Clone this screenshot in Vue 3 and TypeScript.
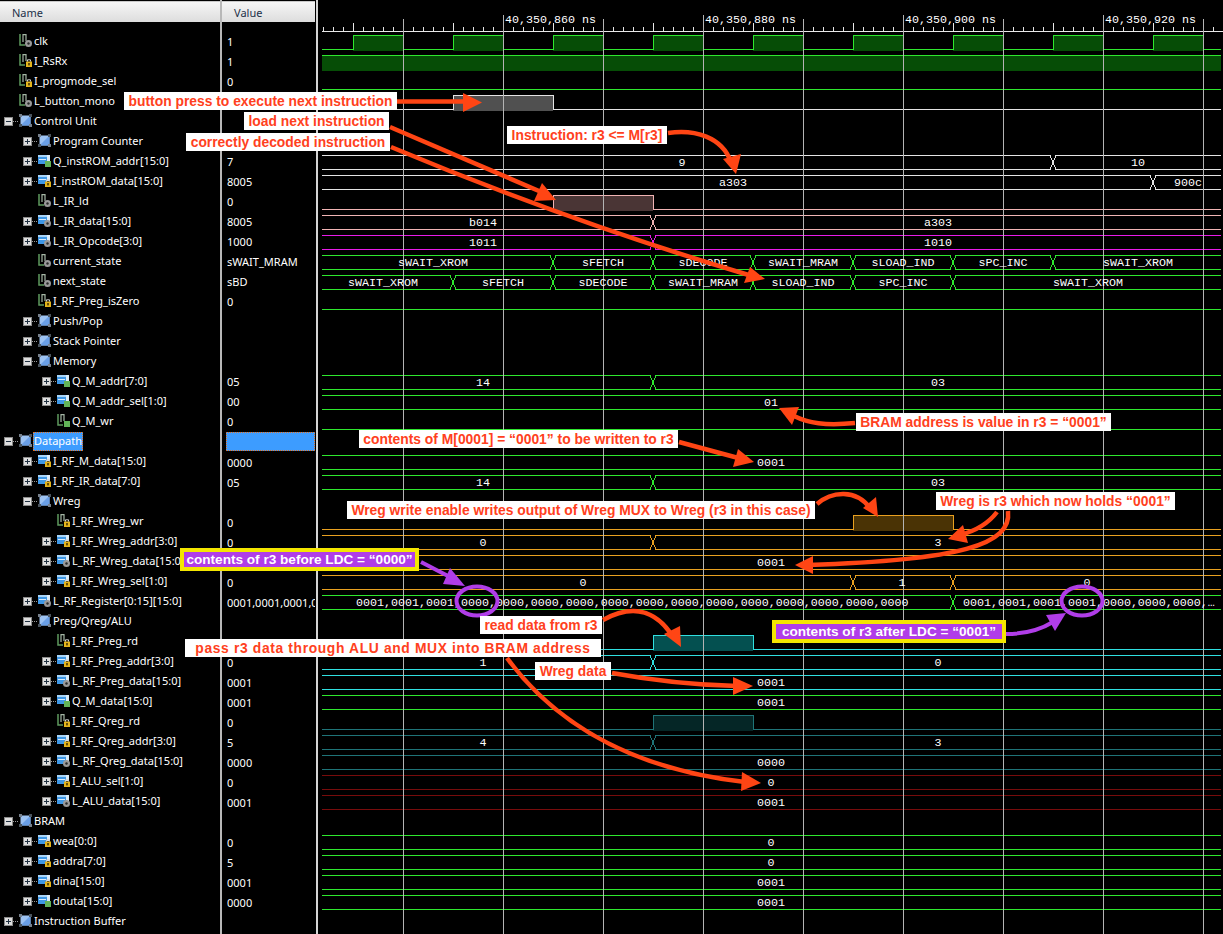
<template>
  <div class="sim">
    <div class="signals">
      <div class="col names">
        <div class="col-head">Name</div>
        <div class="col-body">
          <div v-for="row in rows" :key="row.name" class="name-row" :class="'depth' + row.depth">
            <span v-if="row.toggle" class="toggle" :class="row.toggle">
              <i class="dots"></i>
            </span>
            <svg class="icon" viewBox="0 0 13 13">
              <template v-if="row.icon === 'group'">
                <rect x="1.5" y="1.5" width="10" height="10" fill="#9cc2f2" />
                <path d="M1.5 11.5 L11.5 1.5 V11.5 Z" fill="#6a9fe6" />
                <rect x="0" y="0" width="3" height="3" fill="#76808c" />
                <rect x="10" y="0" width="3" height="3" fill="#4a545e" />
                <rect x="0" y="10" width="3" height="3" fill="#4a545e" />
                <rect x="10" y="10" width="3" height="3" fill="#76808c" />
              </template>
              <template v-else-if="row.kind === 'bus'">
                <rect x="0" y="1" width="9" height="9" fill="#3f98e6" />
                <rect x="0" y="1" width="9" height="2" fill="#a8d4f8" />
                <rect x="1" y="5" width="7" height="1" fill="#d8ecff" />
                <rect x="9" y="1" width="3" height="6" fill="#dcecfa" />
              </template>
              <template v-else>
                <path d="M1 0 V11 H6" fill="none" stroke="#5f9a5f" stroke-width="1.5" />
                <path d="M4 0 V8 M4 .7 H7 V7" fill="none" stroke="#a4b6a4" stroke-width="1.2" />
              </template>
              <template v-if="row.badge === 'lock'">
                <rect x="7" y="7.5" width="6" height="5.5" fill="#e4b41c" />
                <path d="M8.5 7.5 V5.8 H11.5 V7.5" fill="none" stroke="#d0d0d0" stroke-width="1" />
                <rect x="9.2" y="9" width="1.6" height="2.4" fill="#4a3600" />
              </template>
              <template v-else-if="row.badge === 'gear'">
                <circle cx="9.5" cy="9.5" r="3.5" fill="#9a9a9a" />
                <circle cx="9.5" cy="9.5" r="1.2" fill="#2a2a2a" />
              </template>
              <rect v-else-if="row.badge === 'out'" x="7" y="7" width="6" height="6" fill="#62b458" />
            </svg>
            <span class="label" :class="{ selected: row.selected }">{{ row.name }}</span>
          </div>
        </div>
      </div>
      <div class="col values">
        <div class="col-head">Value</div>
        <div class="col-body">
          <div v-for="row in rows" :key="row.name" class="value-row">
            <span v-if="row.selected" class="value-selected"></span>
            <template v-else>{{ row.value }}</template>
          </div>
        </div>
      </div>
    </div>

    <svg class="wave" width="905" height="934" viewBox="318 0 905 934">
      <path :d="rulerPath" class="ruler" />
      <text v-for="t in rulerLabels" :key="t" class="mono" :x="t" y="23">40,350,{{ 860 + (t - 505) / 10 }} ns</text>

      <g v-for="w in waves" :key="w.row">
        <rect v-for="p in w.pulses || []" :key="p[0]" :x="p[0]" :y="top(w.row)" :width="p[1] - p[0]" height="16" :fill="w.fill" />
        <path :d="wavePath(w)" fill="none" :stroke="w.color" shape-rendering="crispEdges" />
      </g>

      <path :d="gridPath" class="grid" />

      <template v-for="w in waves" :key="w.row">
        <text v-for="l in w.labels || []" :key="l[0]" class="mono" :x="l[0]" :y="41 + 20 * w.row + 5" text-anchor="middle">{{ l[1] }}</text>
      </template>
      <text class="mono" x="356" y="606">{{ regBefore }}</text>
      <text class="mono" x="963" y="606">{{ regAfter }}</text>
    </svg>

    <svg class="notes-layer" width="1223" height="934" viewBox="0 0 1223 934">
      <path v-for="d in redLines" :key="d" :d="d" class="red-line" />
      <polygon v-for="p in redHeads" :key="p" :points="p" fill="#ff4514" />
      <path v-for="d in purpleLines" :key="d" :d="d" class="purple-line" />
      <polygon v-for="p in purpleHeads" :key="p" :points="p" fill="#b03de8" />
      <ellipse cx="477" cy="601" rx="20.5" ry="14.5" class="purple-line" />
      <ellipse cx="1082" cy="601" rx="20.5" ry="14.5" class="purple-line" />
    </svg>

    <div
      v-for="n in notes"
      :key="n.text"
      class="note"
      :class="{ purple: n.purple, spaced: n.spaced }"
      :style="{ left: n.x + 'px', top: n.y + 'px', width: n.w + 'px', height: n.h + 'px' }"
    >
      {{ n.text }}
    </div>
  </div>
</template>

<script setup lang="ts">
interface Row {
  name: string
  value?: string
  depth: number
  toggle?: 'plus' | 'minus'
  icon?: 'group'
  kind?: 'bus' | 'bit'
  badge?: 'lock' | 'gear' | 'out'
  selected?: boolean
}

interface Wave {
  row: number
  color: string
  fill?: string
  pulses?: number[][]
  crosses?: number[]
  bus?: boolean
  labels?: [number, string][]
}

interface Note {
  x: number
  y: number
  w: number
  h: number
  text: string
  purple?: boolean
  spaced?: boolean
}

const group = (name: string, depth: number, toggle: 'plus' | 'minus', selected = false): Row => ({
  name, depth, toggle, icon: 'group', selected
})
const bus = (name: string, value: string, depth: number, badge: 'lock' | 'gear' | 'out'): Row => ({
  name, value, depth, toggle: 'plus', kind: 'bus', badge
})
const bit = (name: string, value: string, depth: number, badge: 'lock' | 'gear' | 'out'): Row => ({
  name, value, depth, kind: 'bit', badge
})

const rows: Row[] = [
  bit('clk', '1', 0, 'gear'),
  bit('I_RsRx', '1', 0, 'lock'),
  bit('I_progmode_sel', '0', 0, 'lock'),
  bit('L_button_mono', '', 0, 'gear'),
  group('Control Unit', 0, 'minus'),
  group('Program Counter', 1, 'plus'),
  bus('Q_instROM_addr[15:0]', '7', 1, 'out'),
  bus('I_instROM_data[15:0]', '8005', 1, 'lock'),
  bit('L_IR_ld', '0', 1, 'gear'),
  bus('L_IR_data[15:0]', '8005', 1, 'gear'),
  bus('L_IR_Opcode[3:0]', '1000', 1, 'gear'),
  bit('current_state', 'sWAIT_MRAM', 1, 'gear'),
  bit('next_state', 'sBD', 1, 'gear'),
  bit('I_RF_Preg_isZero', '0', 1, 'lock'),
  group('Push/Pop', 1, 'plus'),
  group('Stack Pointer', 1, 'plus'),
  group('Memory', 1, 'minus'),
  bus('Q_M_addr[7:0]', '05', 2, 'out'),
  bus('Q_M_addr_sel[1:0]', '00', 2, 'out'),
  bit('Q_M_wr', '0', 2, 'out'),
  group('Datapath', 0, 'minus', true),
  bus('I_RF_M_data[15:0]', '0000', 1, 'lock'),
  bus('I_RF_IR_data[7:0]', '05', 1, 'lock'),
  group('Wreg', 1, 'minus'),
  bit('I_RF_Wreg_wr', '0', 2, 'lock'),
  bus('I_RF_Wreg_addr[3:0]', '0', 2, 'lock'),
  bus('L_RF_Wreg_data[15:0]', '0001', 2, 'gear'),
  bus('I_RF_Wreg_sel[1:0]', '0', 2, 'lock'),
  bus('L_RF_Register[0:15][15:0]', '0001,0001,0001,0000', 1, 'gear'),
  group('Preg/Qreg/ALU', 1, 'minus'),
  bit('I_RF_Preg_rd', '0', 2, 'lock'),
  bus('I_RF_Preg_addr[3:0]', '0', 2, 'lock'),
  bus('L_RF_Preg_data[15:0]', '0001', 2, 'gear'),
  bus('Q_M_data[15:0]', '0001', 2, 'out'),
  bit('I_RF_Qreg_rd', '0', 2, 'lock'),
  bus('I_RF_Qreg_addr[3:0]', '5', 2, 'lock'),
  bus('L_RF_Qreg_data[15:0]', '0000', 2, 'gear'),
  bus('I_ALU_sel[1:0]', '0', 2, 'lock'),
  bus('L_ALU_data[15:0]', '0001', 2, 'gear'),
  group('BRAM', 0, 'minus'),
  bus('wea[0:0]', '0', 1, 'lock'),
  bus('addra[7:0]', '5', 1, 'lock'),
  bus('dina[15:0]', '0001', 1, 'lock'),
  bus('douta[15:0]', '0000', 1, 'out'),
  group('Instruction Buffer', 0, 'plus')
]

const GREEN = '#2ee82e'
const WHITE = '#e4e4e4'
const PINK = '#f0b4b4'
const MAGENTA = '#e81ce8'
const ORANGE = '#e8a020'
const CYAN = '#30e0e0'
const TEAL = '#1f7478'
const DARKRED = '#780c0c'

const waves: Wave[] = [
  {
    row: 0, color: GREEN, fill: '#064d06',
    pulses: [[353, 403], [453, 503], [553, 603], [653, 703], [753, 803], [853, 903], [953, 1003], [1053, 1103], [1153, 1203]]
  },
  { row: 1, color: GREEN, fill: '#064d06', pulses: [[322, 1221]] },
  { row: 2, color: GREEN },
  { row: 3, color: WHITE, fill: '#505050', pulses: [[453, 553]] },
  { row: 6, bus: true, color: WHITE, crosses: [1053], labels: [[682, '9'], [1138, '10']] },
  { row: 7, bus: true, color: WHITE, crosses: [1153], labels: [[733, 'a303'], [1188, '900c']] },
  { row: 8, color: PINK, fill: '#4a3535', pulses: [[553, 653]] },
  { row: 9, bus: true, color: PINK, crosses: [653], labels: [[483, 'b014'], [938, 'a303']] },
  { row: 10, bus: true, color: MAGENTA, crosses: [653], labels: [[483, '1011'], [938, '1010']] },
  {
    row: 11, bus: true, color: GREEN, crosses: [553, 653, 753, 853, 953, 1053],
    labels: [[433, 'sWAIT_XROM'], [603, 'sFETCH'], [703, 'sDECODE'], [803, 'sWAIT_MRAM'], [903, 'sLOAD_IND'], [1003, 'sPC_INC'], [1138, 'sWAIT_XROM']]
  },
  {
    row: 12, bus: true, color: GREEN, crosses: [453, 553, 653, 753, 853, 953],
    labels: [[383, 'sWAIT_XROM'], [503, 'sFETCH'], [603, 'sDECODE'], [703, 'sWAIT_MRAM'], [803, 'sLOAD_IND'], [903, 'sPC_INC'], [1088, 'sWAIT_XROM']]
  },
  { row: 13, color: GREEN },
  { row: 17, bus: true, color: GREEN, crosses: [653], labels: [[483, '14'], [938, '03']] },
  { row: 18, bus: true, color: GREEN, labels: [[771, '01']] },
  { row: 19, color: GREEN },
  { row: 21, bus: true, color: GREEN, labels: [[771, '0001']] },
  { row: 22, bus: true, color: GREEN, crosses: [653], labels: [[483, '14'], [938, '03']] },
  { row: 24, color: ORANGE, fill: '#4a3305', pulses: [[853, 953]] },
  { row: 25, bus: true, color: ORANGE, crosses: [653], labels: [[483, '0'], [938, '3']] },
  { row: 26, bus: true, color: ORANGE, labels: [[771, '0001']] },
  { row: 27, bus: true, color: ORANGE, crosses: [853, 953], labels: [[583, '0'], [902, '1'], [1087, '0']] },
  { row: 28, bus: true, color: GREEN, crosses: [953] },
  { row: 30, color: CYAN, fill: '#045050', pulses: [[653, 753]] },
  { row: 31, bus: true, color: CYAN, crosses: [653], labels: [[483, '1'], [938, '0']] },
  { row: 32, bus: true, color: CYAN, labels: [[771, '0001']] },
  { row: 33, bus: true, color: GREEN, labels: [[771, '0001']] },
  { row: 34, color: TEAL, fill: '#052626', pulses: [[653, 753]] },
  { row: 35, bus: true, color: TEAL, crosses: [653], labels: [[483, '4'], [938, '3']] },
  { row: 36, bus: true, color: TEAL, labels: [[771, '0000']] },
  { row: 37, bus: true, color: DARKRED, labels: [[771, '0']] },
  { row: 38, bus: true, color: DARKRED, labels: [[771, '0001']] },
  { row: 40, bus: true, color: GREEN, labels: [[771, '0']] },
  { row: 41, bus: true, color: GREEN, labels: [[771, '0']] },
  { row: 42, bus: true, color: GREEN, labels: [[771, '0001']] },
  { row: 43, bus: true, color: GREEN, labels: [[771, '0001']] }
]

const START = 322
const END = 1221

const top = (row: number) => 41 + 20 * row - 6

// line paths sit on half pixels so they stay one pixel wide
const wavePath = (w: Wave): string => {
  const hi = top(w.row) + 0.5
  const lo = hi + 14
  if (w.bus) {
    let d = ''
    let from = START
    for (const x of w.crosses || []) {
      d += `M${from} ${hi}H${x - 3}M${from} ${lo}H${x - 3}`
      d += `M${x - 3} ${hi}L${x + 3} ${lo}M${x - 3} ${lo}L${x + 3} ${hi}`
      from = x + 3
    }
    return d + `M${from} ${hi}H${END}M${from} ${lo}H${END}`
  }
  const pulses = w.pulses || []
  let d = ''
  let from = START
  for (const p of pulses) {
    if (p[0] > from) d += `M${from} ${lo}H${p[0]}V${hi}`
    else d += `M${p[0]} ${hi}`
    d += `H${p[1]}`
    if (p[1] < END) d += `V${lo}`
    from = p[1]
  }
  if (from < END) d += `${pulses.length ? '' : `M${from} ${lo}`}H${END}`
  return d
}

const rulerLabels = [505, 705, 905, 1105]

const rulerPath = (() => {
  let d = 'M322 31.5H1223'
  for (let x = 323; x < 1223; x += 10) {
    const h = (x - 353) % 50 === 0 ? 8 : 4
    d += `M${x + 0.5} 31V${31 - h}`
  }
  return d
})()

const gridPath = (() => {
  let d = ''
  for (let x = 403; x < 1223; x += 100) {
    d += `M${x + 0.5} ${(x - 503) % 200 === 0 ? 15 : 19}V934`
  }
  return d
})()

const regBefore = ['0001', '0001', '0001', ...Array(13).fill('0000')].join(',')
const regAfter = '0001,0001,0001,0001,0000,0000,0000,…'

const notes: Note[] = [
  { x: 124, y: 92, w: 273, h: 18, text: 'button press to execute next instruction' },
  { x: 244, y: 112, w: 145, h: 18, text: 'load next instruction' },
  { x: 186, y: 133, w: 204, h: 18, text: 'correctly decoded instruction' },
  { x: 507, y: 126, w: 160, h: 18, text: 'Instruction: r3 <= M[r3]' },
  { x: 856, y: 413, w: 255, h: 18, text: 'BRAM address is value in r3 = “0001”' },
  { x: 359, y: 430, w: 319, h: 18, text: 'contents of M[0001] = “0001” to be written to r3' },
  { x: 347, y: 501, w: 468, h: 18, text: 'Wreg write enable writes output of Wreg MUX to Wreg (r3 in this case)' },
  { x: 936, y: 492, w: 239, h: 18, text: 'Wreg is r3 which now holds “0001”' },
  { x: 180, y: 548, w: 239, h: 23, text: 'contents of r3 before LDC = “0000”', purple: true },
  { x: 480, y: 616, w: 122, h: 18, text: 'read data from r3' },
  { x: 185, y: 639, w: 416, h: 18, text: 'pass r3 data through ALU and MUX into BRAM address', spaced: true },
  { x: 535, y: 662, w: 76, h: 18, text: 'Wreg data' },
  { x: 772, y: 620, w: 234, h: 23, text: 'contents of r3 after LDC = “0001”', purple: true }
]

const redLines = [
  'M397 101.5 H466',
  'M390 127 L546 194',
  'M391 147 Q570 222 752 276',
  'M668 133 C695 129 722 137 731 162',
  'M855 423 C825 426 808 423 794 416',
  'M679 442 L742 459',
  'M817 504 C832 491 856 489 870 508',
  'M997 512 C988 524 975 531 960 535',
  'M1008 511 C1012 545 960 560 808 565',
  'M603 620 C630 605 655 608 673 637',
  'M612 673 C650 680 690 685 737 686',
  'M507 658 C560 730 640 770 745 782'
]

const redHeads = [
  '463,93 482,102.5 463,112',
  '542,183 534,201 556,200',
  '750,267 744,283 765,279',
  '723,159 741,154 736,174',
  '799,407 792,425 779,408',
  '738,449 733,467 754,462',
  '863,508 876,497 878,517',
  '963,525 968,543 948,539',
  '813,556 813,574 795,565',
  '664,634 680,626 681,647',
  '733,677 733,695 753,686',
  '742,772 741,791 761,783'
]

const purpleLines = [
  'M421 562 L450 577',
  'M1006 634 C1025 634 1040 630 1053 622'
]

const purpleHeads = [
  '450,568 443,584 465,586',
  '1046,615 1055,631 1066,613'
]
</script>

<style>
html,
body {
  background: #000;
  overflow: hidden;
}
</style>

<style scoped>
.sim {
  position: relative;
  display: flex;
  width: 1223px;
  height: 934px;
  overflow: hidden;
  background: #000;
}

.signals {
  display: flex;
  flex: none;
  width: 318px;
  height: 100%;
  font-family: "Noto Sans", "Liberation Sans", sans-serif;
  font-size: 11px;
  color: #fff;
}

.col {
  height: 100%;
}

.names {
  flex: none;
  width: 222px;
  box-sizing: border-box;
  border-right: 2px solid #b8b8b8;
  overflow: hidden;
}

.values {
  flex: none;
  width: 93px;
  overflow: hidden;
}

.signals::after {
  content: "";
  flex: none;
  width: 2px;
  margin-left: 1px;
  background: #d4d4d4;
}

.col-head {
  height: 21px;
  margin-top: 1px;
  line-height: 22px;
  padding-left: 12px;
  color: #1c3048;
  background: linear-gradient(#f6f6f6, #dddddd);
  border-top: 1px solid #c8c8c8;
  box-sizing: border-box;
}

.col-body {
  padding-top: 9px;
}

.name-row {
  position: relative;
  display: flex;
  align-items: flex-start;
  height: 20px;
  white-space: nowrap;
  padding-left: 19px;
}

.depth1 {
  padding-left: 38px;
}

.depth2 {
  padding-left: 57px;
}

.toggle {
  position: absolute;
  top: 6px;
  margin-left: -15px;
  width: 7px;
  height: 7px;
  background: #dedede;
  border: 1px solid #8a8a8a;
}

.toggle::before {
  content: "";
  position: absolute;
  left: 1px;
  right: 1px;
  top: 3px;
  height: 1px;
  background: #203040;
}

.toggle.plus::after {
  content: "";
  position: absolute;
  top: 1px;
  bottom: 1px;
  left: 3px;
  width: 1px;
  background: #203040;
}

.dots {
  position: absolute;
  left: 8px;
  top: 3px;
  width: 5px;
  border-top: 1px dotted #9a9a9a;
}

.icon {
  flex: none;
  width: 13px;
  height: 13px;
  margin: 3px 2px 0 0;
}

.label {
  height: 19px;
  margin-top: 1px;
  line-height: 17px;
}

.label.selected {
  margin-left: -1px;
  padding: 0 1px;
  background: #3d9cff;
  outline: 1px dotted #e07020;
  outline-offset: -1px;
}

.value-row {
  height: 20px;
  line-height: 22px;
  padding-left: 5px;
  white-space: nowrap;
}

.value-selected {
  display: block;
  height: 19px;
  margin: 1px 0 0 -1px;
  background: #3d9cff;
  outline: 1px dotted #e07020;
  outline-offset: -1px;
}

.wave {
  flex: none;
  display: block;
}

.ruler {
  fill: none;
  stroke: #e8e8e8;
  shape-rendering: crispEdges;
}

.grid {
  fill: none;
  stroke: #b4b4b4;
  shape-rendering: crispEdges;
}

.mono {
  font-family: "Liberation Mono", "DejaVu Sans Mono", monospace;
  font-size: 11.67px;
  fill: #fff;
}

.notes-layer {
  position: absolute;
  left: 0;
  top: 0;
  pointer-events: none;
}

.red-line {
  fill: none;
  stroke: #ff4514;
  stroke-width: 4.5;
}

.purple-line {
  fill: none;
  stroke: #b03de8;
  stroke-width: 4;
}

.note {
  position: absolute;
  display: flex;
  align-items: center;
  justify-content: center;
  box-sizing: border-box;
  white-space: nowrap;
  background: #fff;
  color: #ff4020;
  font-family: "Liberation Sans", Arial, sans-serif;
  font-size: 13.85px;
  font-weight: 700;
}

.note.spaced {
  letter-spacing: 0.64px;
}

.note.purple {
  background: #b03de8;
  color: #fff;
  border: 4px solid #f4e600;
  font-size: 13.6px;
}
</style>
